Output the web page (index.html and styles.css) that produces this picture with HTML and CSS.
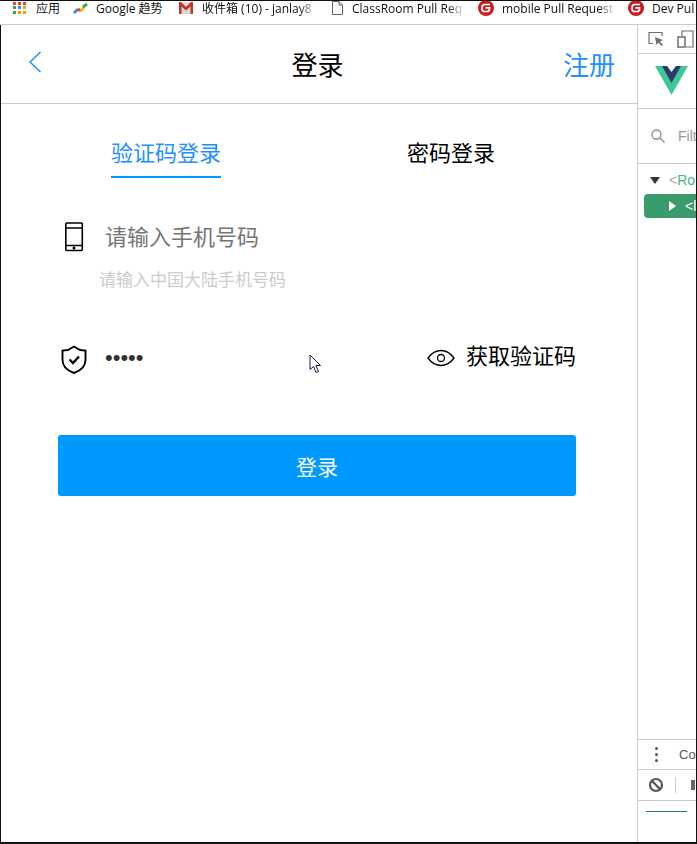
FILE: index.html
```html
<!DOCTYPE html>
<html lang="zh-CN">
  <head>
    <meta charset="UTF-8" />
    <title>登录</title>
    <link rel="stylesheet" href="styles.css">
  </head>
  <body>
    <div class="bookmarks">
      <div class="mark apps">
        <svg class="appsIcon" width="13" height="12" viewBox="0 0 13 12">
          <rect x="0" y="0" width="3" height="3" fill="#ea4335" /><rect x="5" y="0" width="3" height="3" fill="#ea4335" /><rect x="10" y="0" width="3" height="3" fill="#ea4335" />
          <rect x="0" y="4" width="3" height="3" fill="#34a853" /><rect x="5" y="4" width="3" height="3" fill="#4285f4" /><rect x="10" y="4" width="3" height="3" fill="#fb9c00" />
          <rect x="0" y="9" width="3" height="3" fill="#34a853" /><rect x="5" y="9" width="3" height="3" fill="#fb9c00" /><rect x="10" y="9" width="3" height="3" fill="#fb9c00" />
        </svg>
        <span>应用</span>
      </div>
      <div class="mark trends">
        <svg width="15" height="11" viewBox="0 0 15 11" fill="none" stroke-width="3">
          <path d="M1 10 L5 6" stroke="#4285f4" /><path d="M5 6 L8 8" stroke="#ea4335" /><path d="M8 8 L11 4" stroke="#fbbc05" /><path d="M10 4 L14 1" stroke="#34a853" />
        </svg>
        <span>Google 趋势</span>
      </div>
      <div class="mark gmail">
        <svg width="14" height="12" viewBox="0 0 14 12">
          <rect x="0" y="0" width="14" height="12" fill="#d8d8d8" />
          <path d="M0 0 H2 L7 5 L12 0 H14 V12 H11.500 V4.500 L7 8.500 L2.500 4.500 V12 H0 Z" fill="#c5342b" />
        </svg>
        <span class="fade wMail">收件箱 (10) - janlay8</span>
      </div>
      <div class="mark doc">
        <svg width="11" height="14" viewBox="0 0 11 14" fill="#fff" stroke="#666">
          <path d="M.5 .5 H7 L10.500 4 V13.500 H.5 Z M7 .5 V4 H10.500" />
        </svg>
        <span class="fade wRoom">ClassRoom Pull Req</span>
      </div>
      <div class="mark gitee one">
        <svg width="16" height="16" viewBox="0 0 16 16">
          <circle cx="8" cy="8" r="8" fill="#c71d23" />
          <path d="M12 4.500 H7 A3 3 0 0 0 4 7.500 V9 A2.500 2.500 0 0 0 6.500 11.500 H9 A2.500 2.500 0 0 0 11.500 9 V7.800 H7.500" fill="none" stroke="#fff" stroke-width="1.700" />
        </svg>
        <span class="fade wMobile">mobile Pull Request</span>
      </div>
      <div class="mark gitee two">
        <svg width="16" height="16" viewBox="0 0 16 16">
          <circle cx="8" cy="8" r="8" fill="#c71d23" />
          <path d="M12 4.500 H7 A3 3 0 0 0 4 7.500 V9 A2.500 2.500 0 0 0 6.500 11.500 H9 A2.500 2.500 0 0 0 11.500 9 V7.800 H7.500" fill="none" stroke="#fff" stroke-width="1.700" />
        </svg>
        <span>Dev Pul</span>
      </div>
    </div>

    <div class="window">
      <main class="app">
        <header class="topBar">
          <svg class="back" width="14" height="22" viewBox="0 0 14 22" fill="none" stroke="#1e90ff" stroke-width="1.500">
            <path d="M12.500 1 L2 11 L12.500 21" />
          </svg>
          <h1>登录</h1>
          <a class="register">注册</a>
        </header>

        <nav class="tabs">
          <div class="tab active">验证码登录</div>
          <div class="tab">密码登录</div>
        </nav>

        <form class="loginForm">
          <div class="field phone">
            <svg class="fieldIcon" width="20" height="30" viewBox="0 0 20 30" fill="none" stroke="#000" stroke-width="1.600">
              <rect x="1.800" y="1" width="16.500" height="27.500" rx="1" />
              <path d="M2 6 H18 M2 23.500 H18" />
              <circle cx="10" cy="26" r=".7" fill="#000" />
            </svg>
            <span class="placeholder">请输入手机号码</span>
          </div>
          <p class="hint">请输入中国大陆手机号码</p>

          <div class="field code">
            <svg class="fieldIcon" width="28" height="30" viewBox="0 0 28 30" fill="none" stroke="#000" stroke-width="1.900">
              <path d="M14 1.500 L20 5 L25.500 5.500 V15 C25.500 21 21 25.500 14 28 C7 25.500 2.500 21 2.500 15 V5.500 L8 5 Z" />
              <path d="M9.500 14.500 L13 18 L19 11.500" stroke-width="2.400" />
            </svg>
            <span class="dots">•••••</span>
            <svg class="eye" width="28" height="18" viewBox="0 0 28 18" fill="none" stroke="#000" stroke-width="1.300">
              <path d="M1 9 C5 3.500 9 1.500 14 1.500 C19 1.500 23 3.500 27 9 C23 14.500 19 16.500 14 16.500 C9 16.500 5 14.500 1 9 Z" />
              <circle cx="14" cy="9" r="3.500" />
            </svg>
            <span class="getCode">获取验证码</span>
          </div>

          <button type="button" class="submit">登录</button>
        </form>

        <svg class="cursor" width="13" height="20" viewBox="0 0 13 20" fill="#fff" stroke="#1a1a40" stroke-width="1">
          <path d="M1 1 V15.500 L4.500 12.500 L7 18.500 L9.500 17.500 L7 11.500 H11.500 Z" />
        </svg>
      </main>

      <aside class="devtools">
        <div class="toolRow">
          <svg width="16" height="16" viewBox="0 0 16 16" fill="none" stroke="#6e6e6e" stroke-width="1.200">
            <path d="M5 12.500 H1 V1.500 H14 V5" />
            <path d="M7 6 L15 9 L12 10.500 L15 14 L13.500 15 L10.500 11.500 L8.500 14 Z" fill="#6e6e6e" stroke="none" />
          </svg>
          <svg width="17" height="18" viewBox="0 0 17 18" fill="none" stroke="#6e6e6e" stroke-width="1.200">
            <path d="M5 6 V1 H16 V17 H9" />
            <rect x="1" y="7" width="7" height="10" stroke-width="1.500" />
          </svg>
        </div>
        <div class="vueRow">
          <svg width="33" height="29" viewBox="0 0 33 29">
            <path d="M0 0 H33 L16.500 29 Z" fill="#3dc896" />
            <path d="M7 0 H26 L16.500 17 Z" fill="#2f3a6b" />
            <path d="M12 0 H21 L16.500 6 Z" fill="#fff" />
          </svg>
        </div>
        <div class="filterRow">
          <svg width="14" height="14" viewBox="0 0 14 14" fill="none" stroke="#8a8a8a" stroke-width="1.300">
            <circle cx="5.500" cy="5.500" r="4.500" />
            <path d="M9 9 L13.500 13.500" />
          </svg>
          <span>Filt</span>
        </div>
        <div class="tree">
          <div class="rootRow"><i class="arrowDown"></i><span class="bracket">&lt;</span><span class="rootName">Ro</span></div>
          <div class="selRow"><i class="arrowRight"></i><span>&lt;l</span></div>
        </div>
        <div class="consoleTab">
          <span class="kebab"><i></i><i></i><i></i></span>
          <span>Co</span>
        </div>
        <div class="consoleBar">
          <svg width="16" height="16" viewBox="0 0 16 16" fill="none" stroke="#555" stroke-width="2.200">
            <circle cx="8" cy="8" r="6" />
            <path d="M3.800 3.800 L12.200 12.200" />
          </svg>
          <i class="sep"></i>
          <i class="stopBar"></i>
        </div>
        <div class="consoleBody"><i class="greenLine"></i></div>
      </aside>
    </div>
  </body>
</html>
```

FILE: styles.css
```css
* {
  margin: 0;
  padding: 0;
  box-sizing: border-box;
}

body {
  width: 697px;
  height: 844px;
  overflow: hidden;
  background: #fff;
  font-family: "Liberation Sans", "Noto Sans CJK SC", sans-serif;
  display: flex;
  flex-direction: column;
  border-right: 1px solid #111;
}

.bookmarks {
  height: 25px;
  flex: none;
  display: flex;
  align-items: center;
  border-top: 1px solid #111;
  border-bottom: 1px solid #ccc;
  padding-bottom: 9px;
  font-family: "Open Sans", "Noto Sans CJK SC", sans-serif;
  font-size: 12px;
  color: #111;
  overflow: hidden;
  white-space: nowrap;
}

.mark {
  display: flex;
  align-items: center;
  flex: none;
}

.apps { width: 60px; padding-left: 13px; gap: 10px; }
.trends { width: 119px; padding-left: 13px; gap: 8px; }
.gmail { width: 140px; gap: 9px; }
.doc { width: 146px; gap: 9px; margin-left: 13px; }
.gitee { gap: 8px; }
.one { width: 150px; }

.fade {
  overflow: hidden;
  -webkit-mask-image: linear-gradient(to right, #000 85%, transparent);
  mask-image: linear-gradient(to right, #000 85%, transparent);
}

.wMail { width: 115px; }
.wRoom { width: 113px; }
.wMobile { width: 114px; }

.window {
  flex: 1;
  display: flex;
  border-left: 1px solid #111;
  border-bottom: 2px solid #111;
  min-height: 0;
}

.app {
  width: 636px;
  flex: none;
  position: relative;
}

.topBar {
  height: 79px;
  display: grid;
  grid-template-columns: 1fr auto 1fr;
  align-items: center;
  border-bottom: 1px solid #ccc;
  padding: 0 22px 2px 27px;
}

.back {
  margin-bottom: 2px;
}

.topBar h1 {
  font-size: 26px;
  font-weight: 400;
  color: #000;
  margin-right: 8px;
}

.register {
  justify-self: end;
  font-size: 26px;
  color: #1e90ff;
}

.tabs {
  display: flex;
  height: 101px;
}

.tab {
  font-size: 22px;
  color: #000;
  height: 49px;
  margin-top: 25px;
  padding-top: 6px;
}

.tab:first-child { margin-left: 110px; }
.tab:last-child { margin-left: 186px; }

.tab.active {
  color: #1e90ff;
  border-bottom: 2px solid #0099ff;
}

.loginForm {
  padding: 0 61px 0 57px;
}

.field {
  display: flex;
  align-items: center;
}

.phone {
  height: 60px;
  padding-left: 6px;
}

.phone .fieldIcon {
  margin: 3px 21px 0 0;
}

.placeholder {
  font-size: 22px;
  color: #757575;
}

.hint {
  font-size: 17px;
  line-height: 24px;
  color: #ccc;
  margin-left: 41px;
  margin-top: 4px;
}

.code {
  height: 60px;
  margin-top: 35px;
  padding-left: 2px;
}

.code .fieldIcon {
  margin: 4px 17px 0 0;
}

.dots {
  font-size: 22px;
  color: #333;
  flex: 1;
}

.eye { margin-right: 11px; }

.getCode {
  font-size: 22px;
  color: #000;
  margin-bottom: 8px;
}

.submit {
  display: block;
  width: 518px;
  height: 61px;
  margin-top: 47px;
  border: none;
  border-radius: 3px;
  background: #0099ff;
  color: #fff;
  font-size: 21px;
  font-family: inherit;
}

.cursor {
  position: absolute;
  left: 308px;
  top: 329px;
}

.devtools {
  flex: 1;
  min-width: 0;
  border-left: 1px solid #ccc;
  display: flex;
  flex-direction: column;
  overflow: hidden;
  font-family: "Liberation Sans", sans-serif;
}

.toolRow {
  height: 29px;
  flex: none;
  display: flex;
  align-items: center;
  gap: 13px;
  padding-left: 10px;
  border-bottom: 1px solid #ccc;
}

.toolRow svg { flex: none; }

.vueRow {
  height: 55px;
  flex: none;
  padding: 12px 0 0 17px;
  border-bottom: 1px solid #ccc;
}

.filterRow {
  height: 55px;
  flex: none;
  display: flex;
  align-items: center;
  gap: 13px;
  padding-left: 13px;
  border-bottom: 1px solid #ccc;
  font-size: 14px;
  color: #999;
  white-space: nowrap;
}

.filterRow svg { flex: none; }

.tree {
  flex: 1;
  padding: 6px 0 0 6px;
  font-size: 14px;
  white-space: nowrap;
  overflow: hidden;
}

.rootRow {
  display: flex;
  align-items: center;
  height: 20px;
  padding-left: 6px;
}

.arrowDown {
  width: 0;
  height: 0;
  flex: none;
  border-left: 5px solid transparent;
  border-right: 5px solid transparent;
  border-top: 7px solid #333;
  margin-right: 9px;
}

.bracket { color: #aaa; }
.rootName { color: #42b983; }

.selRow {
  display: flex;
  align-items: center;
  height: 24px;
  margin-top: 4px;
  background: #3a9c6b;
  border-radius: 4px 0 0 4px;
  color: #fff;
  padding-left: 25px;
}

.arrowRight {
  width: 0;
  height: 0;
  flex: none;
  border-top: 5px solid transparent;
  border-bottom: 5px solid transparent;
  border-left: 7px solid #fff;
  margin-right: 9px;
}

.consoleTab {
  height: 31px;
  flex: none;
  display: flex;
  align-items: center;
  gap: 21px;
  padding-left: 17px;
  border-top: 1px solid #ccc;
  border-bottom: 1px solid #ccc;
  font-size: 13px;
  color: #555;
  white-space: nowrap;
}

.kebab {
  display: flex;
  flex-direction: column;
  gap: 3px;
  flex: none;
}

.kebab i {
  display: block;
  width: 3px;
  height: 3px;
  border-radius: 50%;
  background: #555;
}

.consoleBar {
  height: 31px;
  flex: none;
  display: flex;
  align-items: center;
  padding-left: 10px;
  border-bottom: 1px solid #ccc;
}

.consoleBar svg { flex: none; }

.sep {
  width: 1px;
  height: 16px;
  background: #ccc;
  margin: 0 15px 0 11px;
  flex: none;
}

.stopBar {
  width: 4px;
  height: 10px;
  background: #666;
  flex: none;
}

.consoleBody {
  height: 41px;
  flex: none;
  padding: 10px 0 0 8px;
}

.greenLine {
  display: block;
  width: 41px;
  height: 1px;
  background: #2e7d5f;
}
```
